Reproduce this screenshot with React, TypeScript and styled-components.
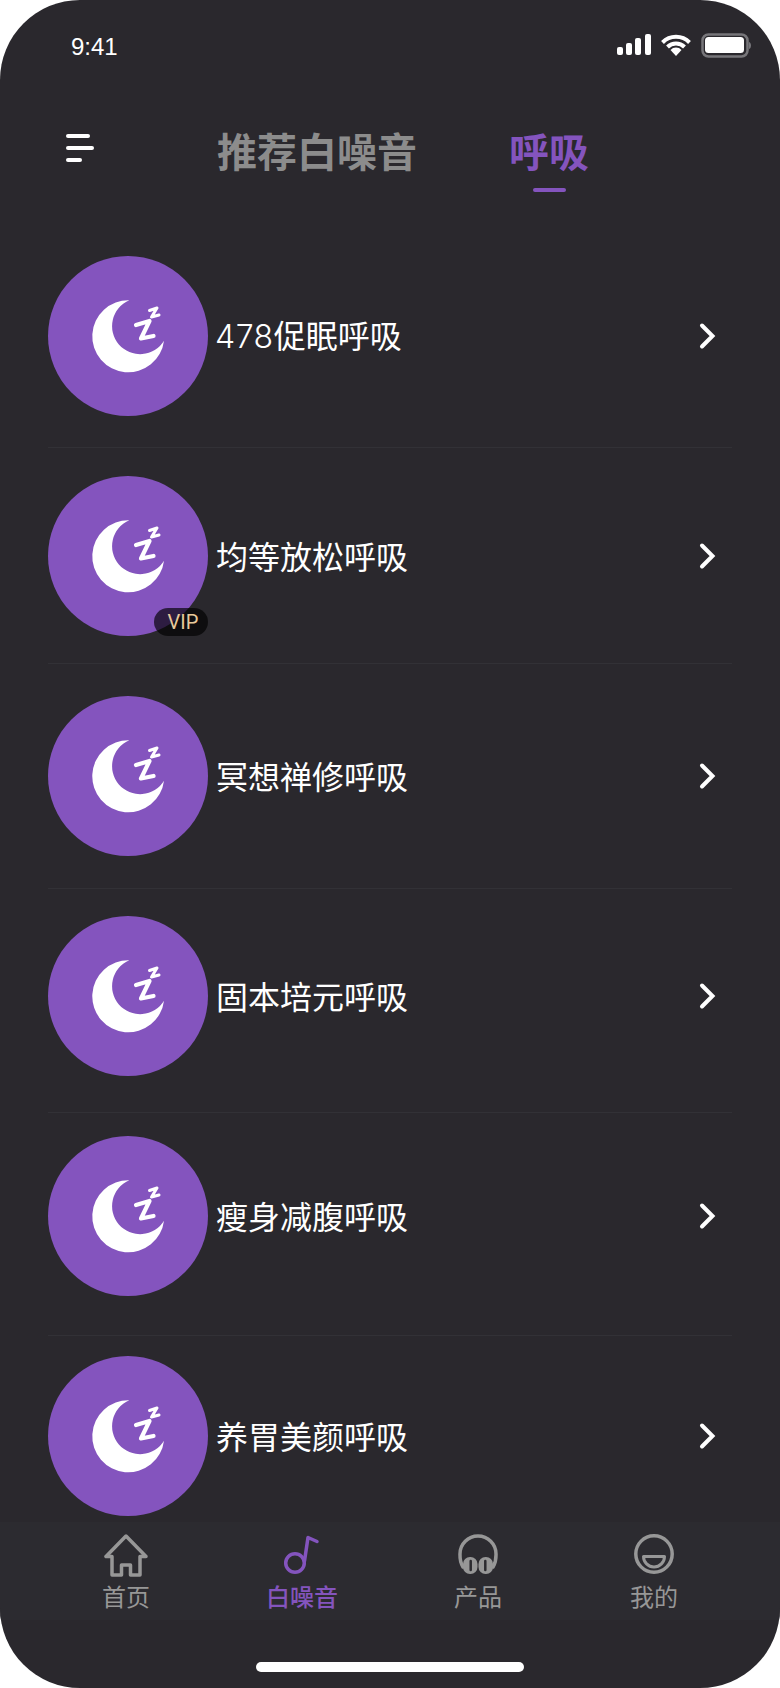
import { createGlobalStyle } from 'styled-components';
import styled from 'styled-components';

const GlobalStyle = createGlobalStyle`
    html, body {
        margin: 0;
        padding: 0;
        background: #ffffff;
    }
`;

const Phone = styled.div`
    width: 780px;
    height: 1688px;
    background: #2a282d;
    border-radius: 80px;
    overflow: hidden;
    display: flex;
    flex-direction: column;
    font-family: 'Noto Sans CJK SC', 'Liberation Sans', sans-serif;
`;
const StatusBar = styled.div`
    flex-shrink: 0;
    height: 94px;
    box-sizing: border-box;
    padding: 33px 29px 0 71px;
    display: flex;
    justify-content: space-between;
    align-items: flex-start;
`;
const Time = styled.span`
    color: #ffffff;
    font-family: 'Liberation Sans', sans-serif;
    font-size: 24px;
    line-height: 28px;
`;
const Header = styled.div`
    flex-shrink: 0;
    height: 162px;
    box-sizing: border-box;
    padding: 40px 0 0 66px;
    display: flex;
    align-items: flex-start;
`;
const Menu = styled.div`
    width: 28px;
    display: flex;
    flex-direction: column;
    gap: 8px;
`;
const MenuLine = styled.span<{ $width: number }>`
    display: block;
    width: ${(p) => p.$width}px;
    height: 4px;
    border-radius: 2px;
    background: #ffffff;
`;
const Tabs = styled.div`
    display: flex;
    gap: 92px;
    margin: -4px 0 0 123px;
`;
const Tab = styled.div<{ $active?: boolean }>`
    display: flex;
    flex-direction: column;
    align-items: center;
    gap: 18px;
    font-size: 40px;
    line-height: 40px;
    font-weight: 700;
    color: ${(p) => (p.$active ? '#8454be' : '#8c8c8c')};
`;
const TabMark = styled.span`
    width: 33px;
    height: 4px;
    border-radius: 2px;
    background: #8454be;
`;
const List = styled.div`
    flex: 1;
    min-height: 0;
    overflow: hidden;
    padding: 0 48px;
`;
const Row = styled.div`
    height: 220px;
`;
const RowBody = styled.div`
    height: 160px;
    display: flex;
    align-items: center;
`;
const Cover = styled.div`
    position: relative;
    width: 160px;
    height: 160px;
    border-radius: 50%;
    background: #8454be;
    flex-shrink: 0;
`;
const VipBadge = styled.span`
    position: absolute;
    right: 0;
    bottom: 0;
    box-sizing: border-box;
    width: 54px;
    height: 28px;
    padding-left: 4px;
    border-radius: 14px;
    background: rgba(0, 0, 0, 0.66);
    color: #e8c99b;
    font-family: 'Roboto', sans-serif;
    font-size: 20px;
    line-height: 28px;
    text-align: center;
`;
const Title = styled.span`
    margin: 0 0 2px 8px;
    color: #ffffff;
    font-size: 32px;
    line-height: 40px;
    font-weight: 400;
`;
const Digits = styled.span`
    margin-left: -1px;
    font-family: 'Inter', sans-serif;
    font-weight: 300;
    letter-spacing: 0.5px;
`;
const Chevron = styled.svg`
    margin-left: auto;
    margin-right: 15px;
    width: 18px;
    height: 28px;
    fill: none;
    stroke: #ffffff;
    stroke-width: 4;
    stroke-linecap: round;
    stroke-linejoin: miter;
`;
const Rule = styled.div<{ $offset: number }>`
    height: 1px;
    margin-top: ${(p) => p.$offset}px;
    background: #323136;
`;
const TabBar = styled.div`
    flex-shrink: 0;
    height: 98px;
    box-sizing: border-box;
    padding: 12px 38px 0;
    display: grid;
    grid-template-columns: repeat(4, 176px);
    background: #2c2b30;
`;
const NavItem = styled.div<{ $active?: boolean }>`
    display: flex;
    flex-direction: column;
    align-items: center;
    color: ${(p) => (p.$active ? '#8454be' : '#979797')};
    font-size: 24px;
    line-height: 30px;
    font-weight: ${(p) => (p.$active ? 500 : 400)};
`;
const NavIcon = styled.svg`
    width: 44px;
    height: 44px;
    display: block;
    margin-bottom: 3px;
    fill: none;
    stroke: currentColor;
    stroke-width: 3.5;
    stroke-linejoin: round;
    stroke-linecap: round;
`;
const HomeArea = styled.div`
    flex-shrink: 0;
    height: 68px;
    display: flex;
    justify-content: center;
    align-items: flex-start;
    padding-top: 42px;
    box-sizing: border-box;
`;
const HomeBar = styled.span`
    width: 268px;
    height: 10px;
    border-radius: 5px;
    background: #ffffff;
`;

const rows = [
    { digits: '478', title: '促眠呼吸', rule: 31 },
    { title: '均等放松呼吸', rule: 27, vip: true },
    { title: '冥想禅修呼吸', rule: 32 },
    { title: '固本培元呼吸', rule: 36 },
    { title: '瘦身减腹呼吸', rule: 39 },
    { title: '养胃美颜呼吸' }
];

function StatusIcons() {
    return (
        <svg width="134" height="26" viewBox="0 0 134 26">
            <g fill="#ffffff">
                <rect x="0" y="14" width="6" height="8" rx="2" />
                <rect x="9" y="10" width="6" height="12" rx="2" />
                <rect x="18" y="5" width="6" height="17" rx="2" />
                <rect x="28" y="1" width="6" height="21" rx="2" />
                <path d="M59 23l-5.500-6a7.500 7.500 0 0 1 11 0z" />
            </g>
            <g fill="none" stroke="#ffffff" strokeWidth="4">
                <path d="M45.500 9.500a19 19 0 0 1 27 0" />
                <path d="M50.500 14a12 12 0 0 1 17 0" />
            </g>
            <rect x="85.500" y="1.500" width="45" height="22" rx="6" fill="none" stroke="#77767a" strokeWidth="2.500" />
            <rect x="88" y="4" width="39" height="16" rx="3.500" fill="#ffffff" />
            <path d="M132 9c1.500.5 2 2 2 3.500s-.5 3-2 3.500z" fill="#77767a" />
        </svg>
    );
}

function SleepIcon() {
    return (
        <svg width="160" height="160" viewBox="0 0 160 160">
            <path d="M81.300 44.300A36 36 0 1 0 116 84.700A28 28 0 1 1 81.300 44.300Z" fill="#ffffff" />
            <g fill="none" stroke="#ffffff" strokeLinecap="round" strokeLinejoin="round">
                <path d="M88 69L101.500 65L93 82.500L105.500 80" strokeWidth="4.200" />
                <path d="M101.500 54.500L109 52L103.500 61L111 59" strokeWidth="3" />
            </g>
        </svg>
    );
}

function App() {
    return (
        <>
            <GlobalStyle />
            <Phone>
                <StatusBar>
                    <Time>9:41</Time>
                    <StatusIcons />
                </StatusBar>
                <Header>
                    <Menu>
                        <MenuLine $width={24} />
                        <MenuLine $width={28} />
                        <MenuLine $width={16} />
                    </Menu>
                    <Tabs>
                        <Tab>推荐白噪音</Tab>
                        <Tab $active>
                            呼吸
                            <TabMark />
                        </Tab>
                    </Tabs>
                </Header>
                <List>
                    {rows.map((row) => (
                        <Row key={row.title}>
                            <RowBody>
                                <Cover>
                                    <SleepIcon />
                                    {row.vip && <VipBadge>VIP</VipBadge>}
                                </Cover>
                                <Title>
                                    {row.digits && <Digits>{row.digits}</Digits>}
                                    {row.title}
                                </Title>
                                <Chevron viewBox="0 0 18 28">
                                    <path d="M3 3.500L13.500 14L3 24.500" />
                                </Chevron>
                            </RowBody>
                            {row.rule && <Rule $offset={row.rule} />}
                        </Row>
                    ))}
                </List>
                <TabBar>
                    <NavItem>
                        <NavIcon viewBox="0 0 44 44">
                            <path d="M22 2L2 22.500H8V41H17.500V31H26.500V41H36V22.500H42Z" />
                        </NavIcon>
                        首页
                    </NavItem>
                    <NavItem $active>
                        <NavIcon viewBox="0 0 44 44">
                            <circle cx="15" cy="29" r="9.300" />
                            <path d="M24.500 27L28 3.500L37 7.500" />
                        </NavIcon>
                        白噪音
                    </NavItem>
                    <NavItem>
                        <NavIcon viewBox="0 0 44 44">
                            <path d="M7 33C3.500 27 4 22 4 20A18 18 0 0 1 40 20C40 22 40.500 27 37 33" />
                            <rect x="7" y="23" width="14.500" height="17" rx="7" fill="currentColor" stroke="none" />
                            <rect x="22.500" y="23" width="14.500" height="17" rx="7" fill="currentColor" stroke="none" />
                            <path d="M14.700 27V36M29.300 27V36" stroke="#2c2b30" strokeWidth="2.500" />
                        </NavIcon>
                        产品
                    </NavItem>
                    <NavItem>
                        <NavIcon viewBox="0 0 44 44">
                            <circle cx="22" cy="20" r="18.200" />
                            <path d="M11.500 22.500H32.500A10.500 10.500 0 0 1 11.500 22.500Z" strokeWidth="3" />
                        </NavIcon>
                        我的
                    </NavItem>
                </TabBar>
                <HomeArea>
                    <HomeBar />
                </HomeArea>
            </Phone>
        </>
    );
}

export default App;
